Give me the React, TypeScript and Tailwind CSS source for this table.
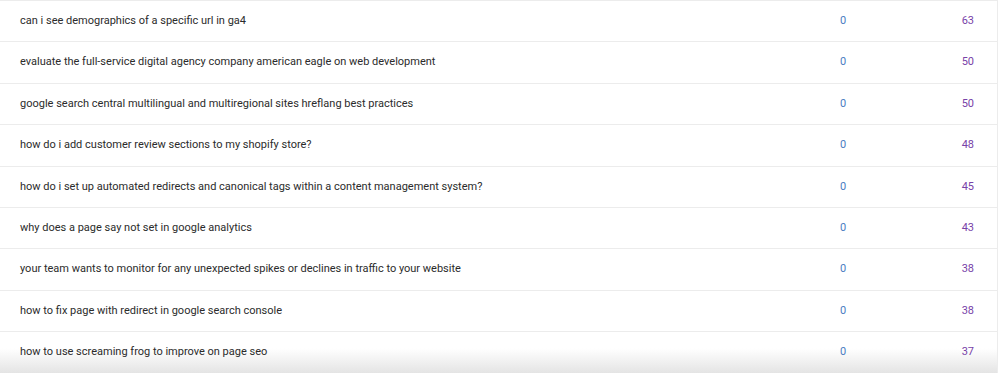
const rows = [
  { query: "can i see demographics of a specific url in ga4", clicks: 0, impressions: 63 },
  { query: "evaluate the full-service digital agency company american eagle on web development", clicks: 0, impressions: 50 },
  { query: "google search central multilingual and multiregional sites hreflang best practices", clicks: 0, impressions: 50 },
  { query: "how do i add customer review sections to my shopify store?", clicks: 0, impressions: 48 },
  { query: "how do i set up automated redirects and canonical tags within a content management system?", clicks: 0, impressions: 45 },
  { query: "why does a page say not set in google analytics", clicks: 0, impressions: 43 },
  { query: "your team wants to monitor for any unexpected spikes or declines in traffic to your website", clicks: 0, impressions: 38 },
  { query: "how to fix page with redirect in google search console", clicks: 0, impressions: 38 },
  { query: "how to use screaming frog to improve on page seo", clicks: 0, impressions: 37 },
];

export default function App() {
  return (
    <div className="w-[1000px] h-[373px] overflow-hidden bg-white font-['Roboto',sans-serif]">
      <div className="w-[998px] border-r border-[#ececec] border-t">
        {rows.map((row, idx) => (
          <div
            key={idx}
            className={`flex items-center h-[41.4px] border-b border-[#ececec] text-[11px] ${
              idx === rows.length - 1 ? "bg-gradient-to-b from-white from-40% to-[#e4e4e4]" : ""
            }`}
          >
            <div className="flex-1 pl-5 text-[#2b2b2b] truncate">{row.query}</div>
            <div className="w-[60px] text-center text-[#4a7dc2]">{row.clicks}</div>
            <div className="w-[101px] text-right mr-[23px] text-[#7842a8]">{row.impressions}</div>
          </div>
        ))}
      </div>
    </div>
  );
}
